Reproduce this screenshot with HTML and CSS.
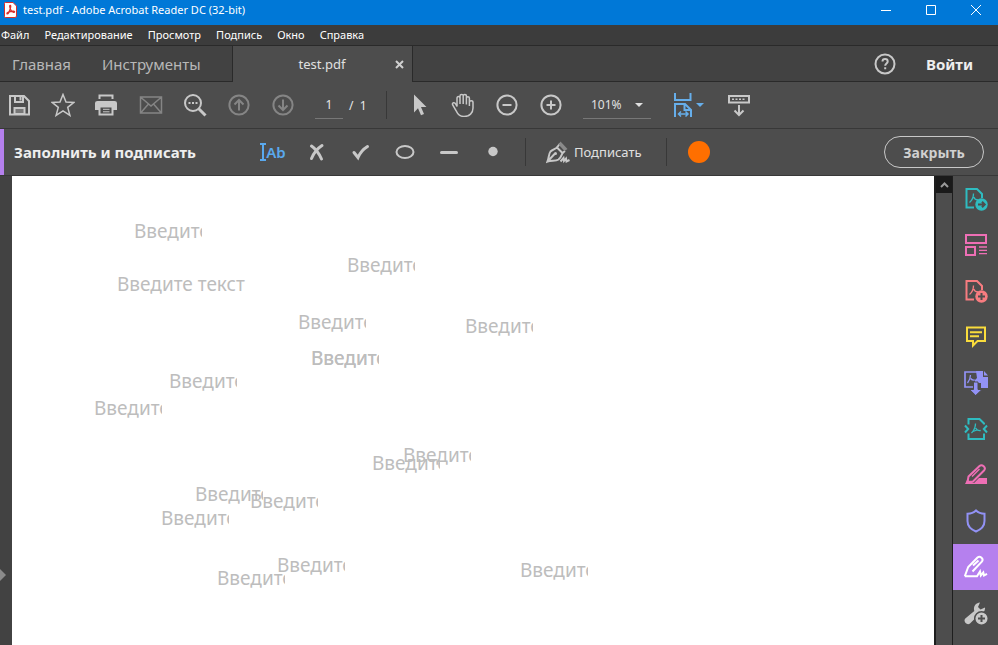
FILE: index.html
```
<!DOCTYPE html>
<html lang="ru">

<head>
    <meta charset="UTF-8">
    <meta name="viewport" content="width=device-width, initial-scale=1">
    <title>test.pdf - Adobe Acrobat Reader DC (32-bit)</title>
    <link rel="stylesheet" href="styles.css">
</head>

<body>
    <header class="titlebar">
        <svg class="app-icon" width="13" height="16" viewBox="0 0 13 16">
            <path d="M1.500 .5h7.500l3.500 3.500v10q0 1.500-1.500 1.500h-9.500q-1 0-1-1v-13q0-1 1-1z" fill="#fff" stroke="#d9302c" />
            <path d="M6.200 3.500c-1.200 0 .2 3.800 1 5.200.8 1.300 3.300 2.300 3.400 1.100.1-1.400-5.800-.4-7.200.9-1.200 1.300.3 1.800 1.300-.1 1-1.900 2.900-7.100 1.500-7.100z" fill="none" stroke="#d9302c" stroke-width="1.300" />
        </svg>
        <span class="window-title">test.pdf - Adobe Acrobat Reader DC (32-bit)</span>
        <div class="window-buttons">
            <button aria-label="Свернуть"><svg width="12" height="12" viewBox="0 0 12 12"><path d="M1 6.500h10" /></svg></button>
            <button aria-label="Развернуть"><svg width="12" height="12" viewBox="0 0 12 12"><path d="M1.500 1.500h9v9h-9z" /></svg></button>
            <button aria-label="Закрыть окно"><svg width="12" height="12" viewBox="0 0 12 12"><path d="M1 1l10 10M11 1L1 11" /></svg></button>
        </div>
    </header>

    <nav class="menubar">
        <a href="#">Файл</a>
        <a href="#">Редактирование</a>
        <a href="#">Просмотр</a>
        <a href="#">Подпись</a>
        <a href="#">Окно</a>
        <a href="#">Справка</a>
    </nav>

    <div class="tabs">
        <div class="tab-links">
            <a href="#">Главная</a>
            <a href="#">Инструменты</a>
        </div>
        <div class="tab-active">
            <span class="tab-name">test.pdf</span>
            <button class="tab-close" aria-label="Закрыть вкладку"><svg width="9" height="9" viewBox="0 0 9 9"><path d="M1 1l7 7M8 1L1 8" /></svg></button>
        </div>
        <div class="tab-right">
            <button class="tool" aria-label="Справка">
                <svg class="icon" viewBox="0 0 24 24"><circle cx="12" cy="12" r="9.500" /><path d="M9.500 9.500c0-3.200 5.200-3.200 5.200 0 0 2-2.500 1.900-2.500 4.200M12.200 15.300v2" /></svg>
            </button>
            <a class="login" href="#">Войти</a>
        </div>
    </div>

    <div class="toolbar">
        <div class="tool-group">
            <button class="tool" aria-label="Сохранить">
                <svg class="icon" viewBox="0 0 24 24"><path d="M3 3h14l5 5v13.500H3z" /><path d="M8 3v6h8V3M13.500 4v3.500" /><path d="M7.500 15h10v6h-10z" fill="#777" /></svg>
            </button>
            <button class="tool" aria-label="Избранное">
                <svg class="icon thin" viewBox="0 0 24 24"><path d="M12 1.500l3 7.500 8 .4-6.300 5 2.200 8L12 17.900l-6.900 4.500 2.200-8L1 9.400 9 9z" /></svg>
            </button>
            <button class="tool" aria-label="Печать">
                <svg class="icon" viewBox="0 0 24 24"><path d="M4.500 6V2.500h13V6" /><path d="M2.500 8h17q2.500 0 2.500 2v7h-4v-4H4v4H0v-7q0-2 2.500-2z" fill="currentColor" stroke="none" /><path d="M4.500 13.500h13v8h-13z" /><path d="M8 16.300h6.500M8 18.800h6.500" stroke-width="1" /></svg>
            </button>
            <button class="tool dim" aria-label="Отправить по почте">
                <svg class="icon thin" viewBox="0 0 24 24"><path d="M1.500 4h21v16h-21zM2 4.500l10 8.500 10-8.500M2 19.500l7.500-8.500M22 19.500L14.500 11" /></svg>
            </button>
            <button class="tool" aria-label="Найти">
                <svg class="icon" viewBox="0 0 24 24"><circle cx="10" cy="10" r="8" /><path d="M15.500 15.500l7 7" stroke-width="3" /><path d="M5.500 10h2M9 10h2M12.500 10h2" /></svg>
            </button>
            <button class="tool dim" aria-label="Предыдущая страница">
                <svg class="icon" viewBox="0 0 24 24"><circle cx="12" cy="12" r="9.600" /><path d="M12 17.500V7M7.500 11.500L12 7l4.500 4.500" /></svg>
            </button>
            <button class="tool dim" aria-label="Следующая страница">
                <svg class="icon" viewBox="0 0 24 24"><circle cx="12" cy="12" r="9.600" /><path d="M12 6.500V17M7.500 12.500L12 17l4.500-4.500" /></svg>
            </button>
        </div>
        <div class="pages">
            <input type="text" value="1" aria-label="Номер страницы">
            <span>/&nbsp; 1</span>
        </div>
        <div class="divider"></div>
        <div class="tool-group">
            <button class="tool" aria-label="Выделение">
                <svg class="icon" viewBox="0 0 24 24"><path d="M7 1.500l12.500 12.500h-5.500l3 7-3 1.300-3-7L7 19.500z" fill="currentColor" stroke="none" /></svg>
            </button>
            <button class="tool" aria-label="Рука">
                <svg class="icon hand" viewBox="0 0 24 24"><path d="M6 13.500V5.200q0-1.700 1.500-1.700T9 5.200V11 3q0-1.600 1.600-1.600T12.200 3v8V3q0-1.600 1.600-1.600T15.400 3v8.500V5.300q0-1.600 1.500-1.600t1.500 1.600V13 9.500q0-1.700 1.800-1.700T22 9.500V15c0 5-3.500 8.500-9 8.500-4.500 0-6.500-2.500-8-6L1.700 12q-.7-2 .8-2.300t2.300 1.500z" /></svg>
            </button>
            <button class="tool" aria-label="Уменьшить">
                <svg class="icon" viewBox="0 0 24 24"><circle cx="12" cy="12" r="9.600" /><path d="M7.500 12h9" /></svg>
            </button>
            <button class="tool" aria-label="Увеличить">
                <svg class="icon" viewBox="0 0 24 24"><circle cx="12" cy="12" r="9.600" /><path d="M7.500 12h9M12 7.500v9" /></svg>
            </button>
        </div>
        <div class="zoom">
            <select aria-label="Масштаб">
                <option>101%</option>
            </select>
            <svg class="caret" viewBox="0 0 8 4"><path d="M0 0h8L4 4z" /></svg>
        </div>
        <button class="fit" aria-label="По ширине окна">
            <svg class="icon" viewBox="0 0 24 24"><path d="M4 0v7h15.500V0M4 24V11h10l6 6v7M13.500 11v6H20" /><path d="M7 21h10.500M10 18.500L7.500 21l2.500 2.500M14.500 18.500L17 21l-2.500 2.500" stroke-width="1.500" /></svg>
            <svg class="caret" viewBox="0 0 8 4"><path d="M0 0h8L4 4z" /></svg>
        </button>
        <button class="tool" aria-label="Показать панель">
            <svg class="icon" viewBox="0 0 24 24"><path d="M2 3h20v6.500H2zM12 12v10M7.500 17.500L12 22l4.500-4.500" /><path d="M5 6.200h14" stroke-dasharray="2 1.500" stroke-width="1.500" /></svg>
        </button>
    </div>

    <div class="fillbar">
        <h1>Заполнить и подписать</h1>
        <div class="tool-group">
            <button class="tool text-tool" aria-label="Добавить текст">
                <svg width="6" height="18" viewBox="0 0 6 18"><path d="M0 1h6M3 1v16M0 17h6" /></svg><span>Ab</span>
            </button>
            <button class="tool" aria-label="Крестик">
                <svg class="icon mark" viewBox="0 0 24 24"><path d="M6.500 6q6 4 10 13M17 5.500Q10 10 6.500 18.500" /></svg>
            </button>
            <button class="tool" aria-label="Галочка">
                <svg class="icon mark" viewBox="0 0 24 24"><path d="M5 12.500l4 5q3-7 9.500-11" /></svg>
            </button>
            <button class="tool" aria-label="Овал">
                <svg class="icon" viewBox="0 0 24 24"><ellipse cx="12" cy="12" rx="8.500" ry="6" /></svg>
            </button>
            <button class="tool" aria-label="Линия">
                <svg class="icon mark" viewBox="0 0 24 24"><path d="M4.500 12.500h15" /></svg>
            </button>
            <button class="tool" aria-label="Точка">
                <svg class="icon" viewBox="0 0 24 24"><circle cx="12" cy="11.500" r="4.700" fill="currentColor" stroke="none" /></svg>
            </button>
        </div>
        <div class="divider"></div>
        <button class="sign">
            <svg class="icon" viewBox="0 0 24 24"><path d="M1.500 21.500C3 18 2.500 14 4.500 11.500 6.500 9.500 9 9 11 7.500l5.500 5.500c-1 2-1.500 4.500-4 6.500-3 2-7 .5-11 2zM2 21l7-7.500" /><circle cx="9.500" cy="13.500" r="1.500" fill="currentColor" stroke="none" /><path d="M11 7.500L14 3.500M16.500 13l2.500-2" /><path d="M14.500 1.500l-2 3 6 6.500 3-2z" fill="#8a8a8a" stroke="none" /><path d="M14.500 21.500l3-3.500.5 3 2-2.500.5 3 3-1.500" /></svg>
            Подписать
        </button>
        <div class="divider"></div>
        <button class="color" aria-label="Цвет"></button>
        <button class="close">Закрыть</button>
    </div>

    <main class="workspace">
        <div class="gutter">
            <button aria-label="Открыть панель навигации"><svg width="6" height="12" viewBox="0 0 6 12"><path d="M0 0l6 6-6 6z" /></svg></button>
        </div>
        <div class="page">
            <input class="field f1" type="text" placeholder="Введите текст" aria-label="Поле 1">
            <input class="field f2" type="text" placeholder="Введите текст" aria-label="Поле 2">
            <input class="field f3" type="text" placeholder="Введите текст" aria-label="Поле 3">
            <input class="field f4" type="text" placeholder="Введите текст" aria-label="Поле 4">
            <input class="field f5" type="text" placeholder="Введите текст" aria-label="Поле 5">
            <input class="field f6" type="text" placeholder="Введите текст" aria-label="Поле 6">
            <input class="field f7" type="text" placeholder="Введите текст" aria-label="Поле 7">
            <input class="field f8" type="text" placeholder="Введите текст" aria-label="Поле 8">
            <input class="field f9" type="text" placeholder="Введите текст" aria-label="Поле 9">
            <input class="field f10" type="text" placeholder="Введите текст" aria-label="Поле 10">
            <input class="field f11" type="text" placeholder="Введите текст" aria-label="Поле 11">
            <input class="field f12" type="text" placeholder="Введите текст" aria-label="Поле 12">
            <input class="field f13" type="text" placeholder="Введите текст" aria-label="Поле 13">
            <input class="field f14" type="text" placeholder="Введите текст" aria-label="Поле 14">
            <input class="field f15" type="text" placeholder="Введите текст" aria-label="Поле 15">
            <input class="field f16" type="text" placeholder="Введите текст" aria-label="Поле 16">
            <input class="field f17" type="text" placeholder="Введите текст" aria-label="Поле 17">
        </div>
        <div class="scrollbar">
            <button aria-label="Прокрутить вверх"><svg width="9" height="6" viewBox="0 0 9 6"><path d="M1 5l3.500-3.500L8 5" /></svg></button>
        </div>
        <aside class="sidebar">
            <button class="teal" aria-label="Экспорт PDF">
                <svg class="icon" viewBox="0 0 24 24"><path d="M10 20.500H2.500v-18.500h10.500l5 5V11" /><path d="M9.500 6.500c0 4-1 6.500-4 9M9.700 10q1 3 4.500 3" stroke-width="1.300" /><circle cx="17.500" cy="17.500" r="6.200" class="solid" /><path class="cut" d="M14 17.500h6.500M18 14.800l2.700 2.700-2.700 2.700" /></svg>
            </button>
            <button class="pink" aria-label="Систематизировать страницы">
                <svg class="icon" viewBox="0 0 24 24"><path d="M2 2h20v8H2zM2 14h9v8H2z" /><path d="M15 14h8M15 17.300h8M15 20.600h8" stroke-width="1.300" /></svg>
            </button>
            <button class="red" aria-label="Создать PDF">
                <svg class="icon" viewBox="0 0 24 24"><path d="M10 20.500H2.500v-18.500h10.500l5 5V11" /><path d="M9.500 6.500c0 4-1 6.500-4 9M9.700 10q1 3 4.500 3" stroke-width="1.300" /><circle cx="17.500" cy="17.500" r="6.200" class="solid" /><path class="cut" d="M14 17.500h7M17.500 14v7" /></svg>
            </button>
            <button class="yellow" aria-label="Комментарии">
                <svg class="icon" viewBox="0 0 24 24"><path d="M3 2.500h18v13.500h-7.500L9 20.500V16H3z" /><path d="M6 7.300h12M6 11.300h9" /></svg>
            </button>
            <button class="violet" aria-label="Объединить файлы">
                <svg class="icon" viewBox="0 0 24 24"><path d="M9 16H1V1h12" stroke-width="1.700" /><path d="M12 0h7v6h5v11h-7v-5h-6V9l2-2z" class="solid" /><path d="M20 0l4 4.500h-4z" class="solid" /><path d="M6.500 4c0 4-1 5.500-3 8M6.700 7.500q1.500 2 4 1.500" stroke-width="1.300" /><path d="M9.500 11h4.500v7.500h4L11.700 24.500 5.500 18.500h4z" fill="currentColor" stroke="#4d4d4d" stroke-width="1" /></svg>
            </button>
            <button class="teal" aria-label="Сжать PDF">
                <svg class="icon" viewBox="0 0 24 24"><path d="M4.500 7.500V2h11l4.500 4.500v1M4.500 16.500V22H20v-5.500M1 8.500L4.200 12 1 15.500M23 8.500L19.800 12l3.200 3.500" /><path d="M11.500 6.500c0 4-1 6.500-4 9.500M11.700 11q1.500 3 5 2.500M9 14.500l4-1.500" stroke-width="1.300" /></svg>
            </button>
            <button class="pink" aria-label="Исправление">
                <svg class="icon" viewBox="0 0 24 24"><path d="M4.500 13.500L15.500 3q2-1.700 4.200.3t.3 4.200L9 18.500l-5.500.5z" /><path d="M8 13.500l7.500-7.500" stroke-width="1.500" /><path d="M1 21h22v-6h-8l-5 5-7-3z" class="solid" /></svg>
            </button>
            <button class="violet" aria-label="Защитить">
                <svg class="icon" viewBox="0 0 24 24"><path d="M12 1.500c2.500 2.500 5 3.200 8.500 3.200V12c0 5-3.500 8.500-8.500 10.500C7 20.500 3.500 17 3.500 12V4.700c3.500 0 6-.7 8.500-3.200z" /></svg>
            </button>
            <button class="active" aria-label="Заполнить и подписать">
                <svg class="icon" viewBox="0 0 24 24"><path d="M.8 21.200L4.200 12 13.500 2.500q2-1.600 4 .2t.3 4L8.500 16.500M.8 21.200H13l3-4.700.8 4 2.500-3 .7 3 3-1.700M9 10.500l5.500-5" /></svg>
            </button>
            <button class="grey" aria-label="Другие инструменты">
                <svg class="icon" viewBox="0 0 24 24"><path d="M1.300 17.500l9-7.500c-1.300-4 1-8 5.700-8.500l-2 4.500 2.500 2.500 4.500-2q.5 3.500-2.500 5.500-5 1-7 5l-5.500 5.500c-3 2.500-7.300-2-4.700-5z" class="solid" /><circle cx="17.500" cy="17.500" r="6.800" fill="currentColor" stroke="#4d4d4d" stroke-width="1.500" /><path class="cut" d="M14 17.500h7M17.500 14v7" /></svg>
            </button>
        </aside>
    </main>
</body>

</html>
```
FILE: styles.css
```
* {
    box-sizing: border-box;
}

body {
    margin: 0;
    height: 100vh;
    display: flex;
    flex-direction: column;
    overflow: hidden;
    background-color: #4d4d4d;
    color: #d0d0d0;
    font-family: "Noto Sans", "Open Sans", sans-serif;
    font-size: 12px;
}

button, input, select {
    font: inherit;
    color: inherit;
    background: none;
    border: none;
    border-radius: 0;
    padding: 0;
    margin: 0;
}

a {
    color: inherit;
    text-decoration: none;
}

button {
    display: flex;
    align-items: center;
    justify-content: center;
    cursor: pointer;
}

svg {
    flex: none;
    fill: none;
    stroke: currentColor;
}

/* Window title */
.titlebar {
    display: flex;
    align-items: center;
    flex: none;
    height: 25px;
    padding: 0 0 6px 4px;
    background-color: #0078d7;
    color: #fff;
}

.window-title {
    margin-left: 6px;
    font-size: 11px;
}

.window-buttons {
    display: flex;
    margin-left: auto;
}

.window-buttons button {
    width: 45px;
    height: 19px;
}

/* Menu */
.menubar {
    display: flex;
    align-items: center;
    flex: none;
    gap: 15px;
    height: 21px;
    padding: 0 0 1px 1px;
    background-color: #3c3c3c;
    border-bottom: 1px solid #2a2a2a;
    color: #fff;
    font-size: 11px;
}

/* Tabs */
.tabs {
    display: flex;
    flex: none;
    height: 36px;
    color: #b8b8b8;
    font-size: 15px;
}

.tab-links {
    display: flex;
    align-items: center;
    gap: 31px;
    width: 232px;
    padding-left: 12px;
    background-color: #424242;
    border-bottom: 1px solid #2a2a2a;
}

.tab-active {
    display: flex;
    align-items: center;
    width: 181px;
    padding-right: 8px;
    border-left: 1px solid #2a2a2a;
    border-right: 1px solid #2a2a2a;
    color: #e0e0e0;
    font-size: 13px;
}

.tab-name {
    flex: 1;
    padding-left: 16px;
    text-align: center;
}

.tab-close svg {
    stroke: #d0d0d0;
    stroke-width: 2;
}

.tab-right {
    display: flex;
    flex: 1;
    align-items: center;
    justify-content: flex-end;
    gap: 24px;
    padding-right: 25px;
    background-color: #424242;
    border-bottom: 1px solid #2a2a2a;
}

.login {
    color: #eee;
    font-weight: bold;
}

/* Toolbars */
.toolbar, .fillbar {
    display: flex;
    align-items: center;
    flex: none;
    height: 47px;
    border-bottom: 1px solid #383838;
}

.toolbar {
    padding-left: 2px;
}

.tool-group {
    display: flex;
    gap: 10px;
}

.tool {
    width: 34px;
    height: 34px;
    color: #c8c8c8;
}

.dim {
    color: #858585;
}

.icon {
    width: 24px;
    height: 24px;
    stroke-width: 2;
}

.thin, .hand {
    stroke-width: 1.5;
}

.mark {
    stroke-width: 3;
    stroke-linecap: round;
}

.divider {
    width: 1px;
    height: 28px;
    background-color: #383838;
}

.pages {
    display: flex;
    align-items: center;
    gap: 6px;
    width: 71px;
    margin-left: 15px;
    color: #e8e8e8;
}

.pages input {
    width: 28px;
    height: 28px;
    text-align: center;
    border-bottom: 1px solid #777;
}

.toolbar .divider {
    margin-right: 15px;
}

.zoom {
    display: flex;
    align-items: center;
    width: 68px;
    height: 28px;
    margin: 0 20px 0 15px;
    padding-right: 8px;
    border-bottom: 1px solid #777;
    color: #e0e0e0;
}

.zoom select {
    flex: 1;
    min-width: 0;
    padding-left: 8px;
    appearance: none;
}

.caret {
    width: 8px;
    height: 4px;
    fill: currentColor;
    stroke: none;
}

.fit {
    gap: 1px;
    margin-right: 18px;
    color: #66aeea;
}

.fillbar {
    padding: 0 14px;
    box-shadow: inset 4px 0 #b580ee;
}

.fillbar h1 {
    width: 242px;
    margin: 0;
    color: #eee;
    font-size: 15px;
}

.text-tool {
    color: #5aa9ee;
    font-size: 15px;
    font-weight: 600;
}

.text-tool svg {
    stroke-width: 2;
}

.fillbar .divider {
    margin-left: 15px;
}

.sign {
    gap: 4px;
    margin-left: 20px;
    color: #e0e0e0;
    font-size: 13px;
}

.sign svg {
    color: #c8c8c8;
}

.sign + .divider {
    margin-left: 24px;
}

.color {
    width: 22px;
    height: 22px;
    margin-left: 21px;
    border-radius: 50%;
    background-color: #ff6f00;
}

.close {
    width: 100px;
    height: 32px;
    margin-left: auto;
    border: 1px solid #c8c8c8;
    border-radius: 16px;
    font-size: 14px;
    font-weight: bold;
}

/* Document area */
.workspace {
    display: flex;
    flex: 1;
    min-height: 0;
}

.gutter {
    display: flex;
    align-items: flex-end;
    width: 12px;
    padding-bottom: 64px;
    background-color: #424242;
}

.gutter svg {
    fill: #8a8a8a;
    stroke: none;
}

.page {
    position: relative;
    flex: 1;
    overflow: hidden;
    background-color: #fff;
}

.field {
    position: absolute;
    width: 68px;
    height: 24px;
    font-size: 19px;
}

.field::placeholder {
    color: #bdbdbd;
    opacity: 1;
}

.f1 { left: 122px; top: 43px; }
.f2 { left: 335px; top: 77px; }
.f3 { left: 105px; top: 96px; width: 140px; }
.f4 { left: 286px; top: 134px; }
.f5 { left: 453px; top: 138px; }
.f6, .f7 { left: 299px; top: 170px; }
.f8 { left: 157px; top: 193px; }
.f9 { left: 82px; top: 220px; }
.f10 { left: 391px; top: 267px; }
.f11 { left: 360px; top: 275px; }
.f12 { left: 183px; top: 306px; }
.f13 { left: 238px; top: 313px; }
.f14 { left: 149px; top: 330px; }
.f15 { left: 265px; top: 377px; }
.f16 { left: 205px; top: 390px; }
.f17 { left: 508px; top: 382px; }

.scrollbar {
    width: 19px;
    border: solid #1e1e1e;
    border-width: 0 1px 0 2px;
}

.scrollbar button {
    width: 16px;
    height: 17px;
    background-color: #1a1a1a;
    color: #999;
}

.scrollbar svg {
    stroke-width: 2;
}

/* Tools panel */
.sidebar {
    width: 45px;
    overflow: hidden;
}

.sidebar button {
    width: 100%;
    height: 46px;
}

.solid {
    fill: currentColor;
    stroke: none;
}

.cut {
    stroke: #4d4d4d;
}

.teal { color: #2fbcc0; }
.pink { color: #ee6fb5; }
.red { color: #f77c80; }
.yellow { color: #f9dc3c; }
.violet { color: #9292f5; }
.grey { color: #c8c8c8; }

.sidebar .active {
    background-color: #b580ee;
    color: #fff;
}
```
